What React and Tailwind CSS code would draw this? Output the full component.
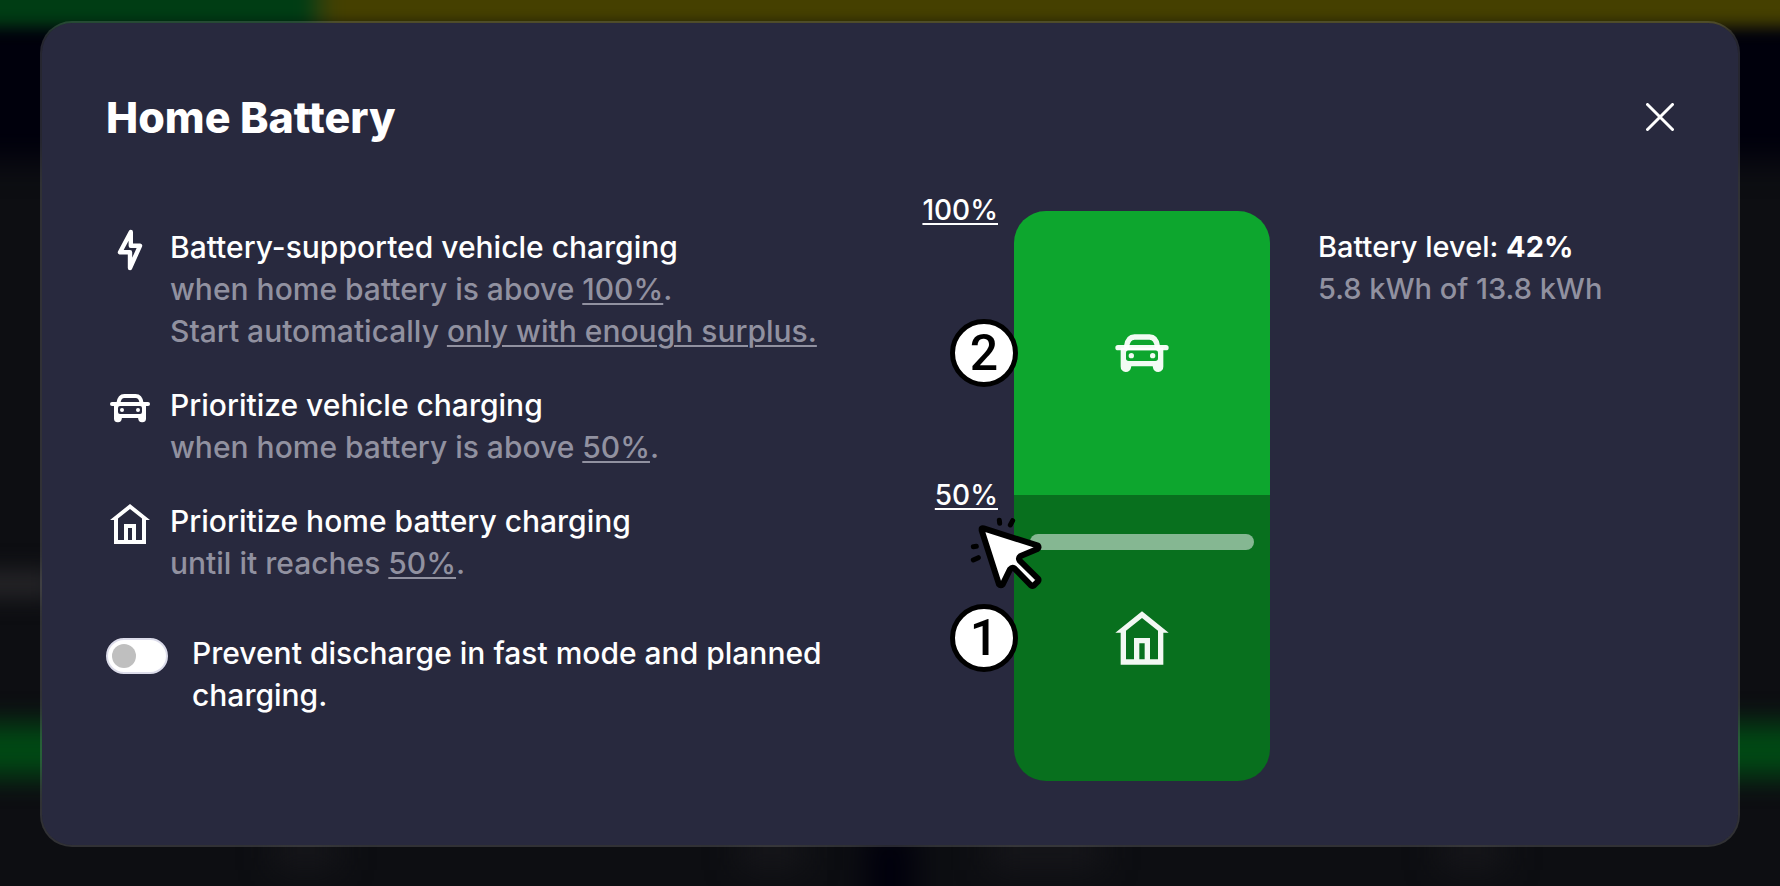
import React from "react";

function BoltIcon({ className }) {
  return (
    <svg viewBox="0 0 24 24" className={className} fill="none" stroke="currentColor" strokeWidth="2.2" strokeLinecap="round" strokeLinejoin="round" aria-hidden="true">
      <path d="M12.4 3 7 13.1h5V21l5-11.1h-4.6z" />
    </svg>
  );
}

function CarIcon({ className }) {
  return (
    <svg viewBox="0 0 24 24" className={className} fill="none" stroke="currentColor" strokeWidth="2" strokeLinecap="round" aria-hidden="true">
      <path d="M3 10h18" />
      <path d="M6.2 9.6C6.5 7.4 7.3 6 9.2 6h5.6c1.9 0 2.7 1.4 3 3.6" />
      <path
        fill="currentColor"
        stroke="none"
        fillRule="evenodd"
        d="M4 10h16v7.1a1.9 1.9 0 0 1-3.9.2L16 17H8l-.1.3A1.9 1.9 0 0 1 4 17.1zM7 11a1 1 0 0 0-1 1v2a1 1 0 0 0 1 1h10a1 1 0 0 0 1-1v-2a1 1 0 0 0-1-1z"
      />
      <circle cx="8" cy="13" r="1" fill="currentColor" stroke="none" />
      <circle cx="16" cy="13" r="1" fill="currentColor" stroke="none" />
    </svg>
  );
}

function HomeIcon({ className }) {
  return (
    <svg viewBox="0 0 24 24" className={className} fill="currentColor" aria-hidden="true">
      <path fillRule="evenodd" d="M12 2 22 10h-2v12H4V10H2zM12 4.5 6 9.3V20h3v-8h6v8h3V9.3zM11 14v6h2v-6z" />
    </svg>
  );
}

function CloseIcon({ className }) {
  return (
    <svg viewBox="0 0 28 28" className={className} fill="none" stroke="currentColor" strokeWidth="3" strokeLinecap="round" aria-hidden="true">
      <path d="M1.5 1.5l25 25M26.5 1.5l-25 25" />
    </svg>
  );
}

function ClickPointer({ className }) {
  return (
    <svg viewBox="0 0 360 330" className={className} fill="none" stroke="#000" strokeLinecap="round" strokeLinejoin="round" aria-hidden="true">
      <path
        fill="#fff"
        strokeWidth="18"
        d="M125 86Q127 84 131 85L294 137Q298 143 292 147L242 168Q234 174 239 182L294 236Q297 240 294 244L281 257Q277 259 273 256L223 205Q216 201 210 208L188 253Q182 259 177 253L125 91Z"
      />
      <path strokeWidth="15" d="M178 61l1 9M218 62l-7 13M100 140l9-1M100 180l15-7" />
    </svg>
  );
}

function Value({ children }) {
  return (
    <button type="button" className="cursor-pointer underline decoration-2 underline-offset-[3px]">
      {children}
    </button>
  );
}

function Rule({ icon, title, children }) {
  return (
    <li className="flex items-start gap-4">
      {icon}
      <div>
        <h2>{title}</h2>
        <div className="text-[#9191a0]">{children}</div>
      </div>
    </li>
  );
}

function Step({ children }) {
  return (
    <span className="absolute top-1/2 -left-16 flex size-[68px] -translate-y-1/2 items-center justify-center rounded-full border-[5px] border-black bg-white font-['Roboto',sans-serif] text-[50px] leading-none font-medium text-black">
      {children}
    </span>
  );
}

function Backdrop() {
  return (
    <div className="absolute inset-0 overflow-hidden bg-[#0d0e12]" aria-hidden="true">
      <div className="absolute -inset-x-10 top-4 h-36 bg-[#00000c] blur-lg" />
      <div className="absolute -inset-x-20 -top-10 h-[66px] bg-linear-to-r from-[#003d14] from-[386px] to-[#454000] to-[416px] blur-[8px]" />
      <div className="absolute top-[572px] -left-10 h-6 w-24 bg-[#29282b] blur-md" />
      <div className="absolute -inset-x-20 top-[724px] h-[52px] bg-[#004a14] blur-[14px]" />
      <div className="absolute -bottom-10 left-[866px] h-24 w-12 bg-[#00000c] blur-lg" />
      <div className="absolute bottom-4 left-[274px] h-10 w-16 bg-[#16161a] blur-lg" />
      <div className="absolute bottom-4 left-[740px] h-10 w-16 bg-[#16161a] blur-lg" />
      <div className="absolute bottom-4 left-[990px] h-10 w-28 bg-[#16161a] blur-lg" />
      <div className="absolute bottom-4 left-[1440px] h-10 w-16 bg-[#16161a] blur-lg" />
    </div>
  );
}

export default function App() {
  return (
    <div className="relative min-h-screen px-10 py-[21px] font-['Inter',sans-serif] text-[28px] leading-[42px] font-medium text-white">
      <Backdrop />
      <main role="dialog" aria-labelledby="dialog-title" className="relative rounded-[32px] border-2 border-white/15 bg-[#28293e] bg-clip-padding p-16">
        <header className="flex h-[60px] items-center justify-between">
          <h1 id="dialog-title" className="text-[43px] leading-[60px] font-extrabold">Home Battery</h1>
          <button type="button" aria-label="Close" className="cursor-pointer">
            <CloseIcon className="size-7" />
          </button>
        </header>

        <div className="mt-16 grid grid-cols-2">
          <section className="pt-[15px] pr-12 text-[30px] leading-[42px]">
            <ul className="flex flex-col gap-8">
              <Rule icon={<BoltIcon className="size-12 shrink-0" />} title="Battery-supported vehicle charging">
                <p>when home battery is above <Value>100%</Value>.</p>
                <p>Start automatically <Value>only with enough surplus.</Value></p>
              </Rule>
              <Rule icon={<CarIcon className="size-12 shrink-0" />} title="Prioritize vehicle charging">
                <p>when home battery is above <Value>50%</Value>.</p>
              </Rule>
              <Rule icon={<HomeIcon className="size-12 shrink-0" />} title="Prioritize home battery charging">
                <p>until it reaches <Value>50%</Value>.</p>
              </Rule>
            </ul>
            <div className="mt-12 flex items-start gap-6">
              <input
                id="prevent-discharge"
                type="checkbox"
                role="switch"
                className="mt-1.5 h-9 w-[62px] shrink-0 cursor-pointer appearance-none rounded-full border-2 border-[#dcdcea] bg-white p-1 before:block before:size-6 before:rounded-full before:bg-[#bfbfbf] checked:before:ml-auto checked:before:bg-[#0da62e]"
              />
              <label htmlFor="prevent-discharge">Prevent discharge in fast mode and planned charging.</label>
            </div>
          </section>

          <section className="flex items-start">
            <div className="flex h-[570px] w-[124px] shrink-0 flex-col items-end pr-4">
              <div className="-mt-[22px] h-1/2"><Value>100%</Value></div>
              <div><Value>50%</Value></div>
            </div>
            <div className="relative flex h-[570px] w-64 shrink-0 flex-col">
              <div className="relative flex h-[284px] items-center justify-center rounded-t-[32px] bg-[#0da62e]">
                <CarIcon className="size-16 text-white/95" />
                <Step>2</Step>
              </div>
              <div className="relative flex flex-1 items-center justify-center rounded-b-[32px] bg-[#08701e]">
                <HomeIcon className="size-16 text-white/95" />
                <Step>1</Step>
              </div>
              <div className="absolute inset-x-4 bottom-[42%] h-4 translate-y-1/2 rounded-full bg-[#85b792]" />
              <ClickPointer className="absolute top-[289px] -left-[74px] h-[110px] w-[120px]" />
            </div>
            <div className="pt-[15px] pl-12 text-[29px] leading-[42px]">
              <p>Battery level: <strong className="font-bold">42%</strong></p>
              <p className="text-[#9191a0]">5.8 kWh of 13.8 kWh</p>
            </div>
          </section>
        </div>
      </main>
    </div>
  );
}
